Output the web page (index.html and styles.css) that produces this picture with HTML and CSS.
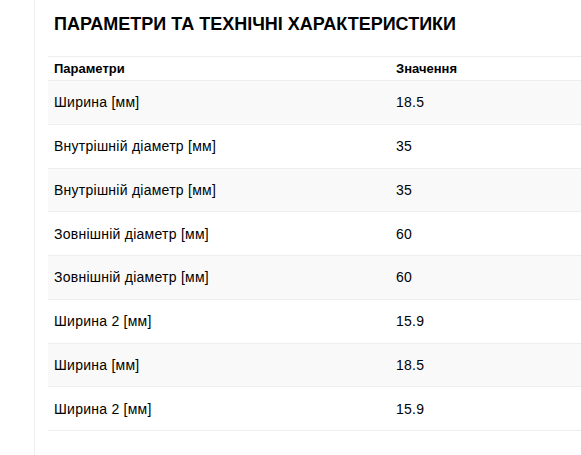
FILE: index.html
```html
<!DOCTYPE html>
<html lang="uk">
<head>
<meta charset="utf-8">
<title>Параметри</title>
<link rel="stylesheet" href="styles.css">
</head>
<body>
<div class="page">
  <div class="content">
    <h2 class="title">ПАРАМЕТРИ ТА ТЕХНІЧНІ ХАРАКТЕРИСТИКИ</h2>
    <table class="specs">
      <thead>
        <tr><th class="col-name">Параметри</th><th>Значення</th></tr>
      </thead>
      <tbody>
        <tr><td>Ширина [мм]</td><td>18.5</td></tr>
        <tr><td>Внутрішній діаметр [мм]</td><td>35</td></tr>
        <tr><td>Внутрішній діаметр [мм]</td><td>35</td></tr>
        <tr><td>Зовнішній діаметр [мм]</td><td>60</td></tr>
        <tr><td>Зовнішній діаметр [мм]</td><td>60</td></tr>
        <tr><td>Ширина 2 [мм]</td><td>15.9</td></tr>
        <tr><td>Ширина [мм]</td><td>18.5</td></tr>
        <tr><td>Ширина 2 [мм]</td><td>15.9</td></tr>
      </tbody>
    </table>
  </div>
</div>
</body>
</html>
```
FILE: styles.css
```css
html, body {
  margin: 0;
  padding: 0;
  background: #fff;
}
body {
  font-family: "Liberation Sans", Arial, sans-serif;
  color: #000;
  width: 581px;
  height: 455px;
  overflow: hidden;
}
.page {
  padding-left: 34px;
  height: 455px;
  box-sizing: border-box;
}
.content {
  border-left: 1px solid #eeeeee;
  padding-left: 13px;
  height: 455px;
  box-sizing: border-box;
}
.title {
  margin: 0;
  padding: 14px 0 0 6px;
  font-size: 18px;
  line-height: 20px;
  font-weight: bold;
  height: 56px;
  box-sizing: border-box;
  white-space: nowrap;
}
.specs {
  border-collapse: collapse;
  width: 100%;
}
.specs th, .specs td {
  text-align: left;
  padding: 11.375px 6px;
  line-height: 20px;
  font-size: 14px;
  letter-spacing: 0.25px;
  border-top: 1px solid #eeeeee;
}
.specs th {
  font-size: 13px;
  letter-spacing: 0;
  font-weight: bold;
  padding: 2px 6px;
  line-height: 19px;
}
.specs .col-name {
  width: 330px;
}
.specs tbody tr:nth-child(odd) td {
  background: #f9f9f9;
}
.specs tbody tr:last-child td {
  border-bottom: 1px solid #eeeeee;
}
```
